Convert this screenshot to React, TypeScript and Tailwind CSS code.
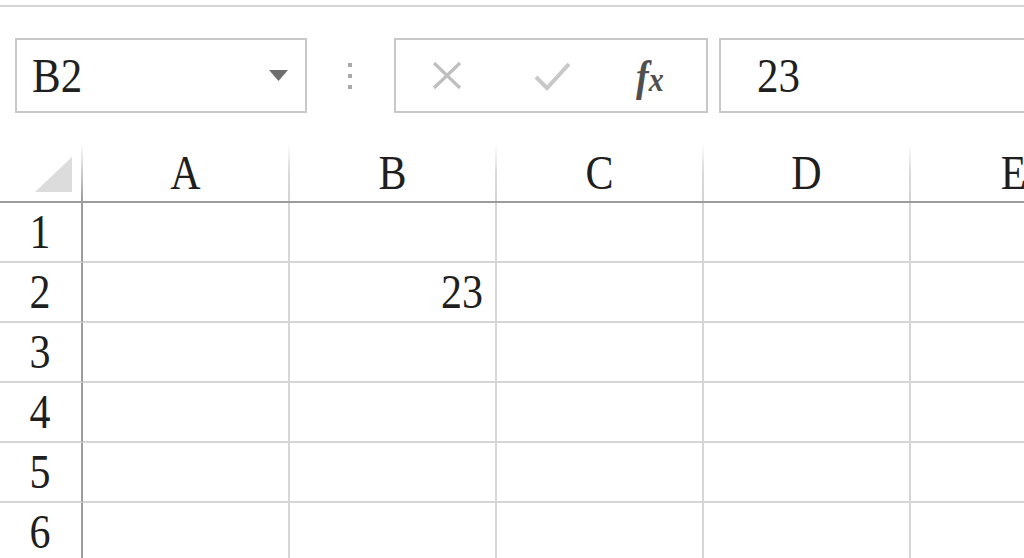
import React from 'react';

const COLS = ['A', 'B', 'C', 'D', 'E'];
const ROWS = [1, 2, 3, 4, 5, 6];

// text in the shot is a bit stretched vertically
function T({ children, className = '' }: { children: React.ReactNode; className?: string }) {
  return <span className={`inline-block scale-y-[1.15] ${className}`}>{children}</span>;
}

export default function App() {
  return (
    <div
      className="w-[1024px] h-[558px] overflow-hidden bg-white text-[#1f1f1f]"
      style={{ fontFamily: '"Liberation Serif", "Times New Roman", serif' }}
    >
      {/* ribbon edge */}
      <div className="mt-[5px] h-[2px] bg-[#d6d6d6]" />

      {/* formula bar */}
      <div className="mt-[31px] flex h-[75px] items-stretch pl-[15px]">
        <div className="flex w-[292px] shrink-0 items-center justify-between border-2 border-[#c8c8c8] pl-[15px] pr-[17px]">
          <T className="text-[43px] leading-none">B2</T>
          <svg width="19" height="11" viewBox="0 0 19 11">
            <path d="M0 0 H19 L9.5 11 Z" fill="#6e6e6e" />
          </svg>
        </div>

        <div className="ml-[40px] flex w-[5px] shrink-0 flex-col items-center justify-center gap-[7px]">
          <div className="h-[4px] w-[4px] bg-[#aaaaaa]" />
          <div className="h-[4px] w-[4px] bg-[#aaaaaa]" />
          <div className="h-[4px] w-[4px] bg-[#aaaaaa]" />
        </div>

        <div className="ml-[42px] flex w-[314px] shrink-0 items-center border-2 border-[#c8c8c8] pl-[36px]">
          <svg width="30" height="29" viewBox="0 0 30 29">
            <path d="M2 2 L28 27 M28 2 L2 27" stroke="#bfbfbf" strokeWidth="3.2" fill="none" />
          </svg>
          <svg width="38" height="30" viewBox="0 0 38 30" className="ml-[72px]">
            <path d="M2 16 L13 27 L35 3" stroke="#c8c8c8" strokeWidth="4" fill="none" />
          </svg>
          <div className="ml-[64px] flex items-baseline font-bold italic text-[#4f4f4f]">
            <T className="text-[38px] leading-none">f</T>
            <T className="text-[30px] leading-none">x</T>
          </div>
        </div>

        <div className="ml-[11px] flex flex-1 items-center border-y-2 border-l-2 border-[#c8c8c8] pl-[36px]">
          <T className="text-[43px] leading-none">23</T>
        </div>
      </div>

      {/* sheet */}
      <div className="mt-[30px]">
        {/* column headers */}
        <div className="flex h-[60px] border-b-2 border-[#9c9c9c]">
          <div className="flex w-[83px] shrink-0">
            <div className="flex-1 pl-[35px] pt-[14px]">
              <svg width="37" height="35" viewBox="0 0 37 35">
                <path d="M37 0 V35 H0 Z" fill="#dcdcdc" />
              </svg>
            </div>
            <div className="w-[2px] bg-linear-to-b from-white to-[#9c9c9c]" />
          </div>
          {COLS.map(c => (
            <div key={c} className="flex w-[207px] shrink-0">
              <div className="flex flex-1 items-center justify-center pt-[2px]">
                <T className="text-[42px] leading-none">{c}</T>
              </div>
              <div className="w-[2px] bg-linear-to-b from-white via-[#dadada] to-[#d4d4d4]" />
            </div>
          ))}
        </div>

        {/* rows */}
        {ROWS.map(r => (
          <div key={r} className="flex h-[60px]">
            <div className="flex w-[83px] shrink-0 border-r-2 border-b-2 border-r-[#9c9c9c] border-b-[#d6d6d6]">
              <div className="flex flex-1 items-center justify-center pr-[1px]">
                <T className="text-[42px] leading-none">{r}</T>
              </div>
            </div>
            {COLS.map(c => (
              <div
                key={c}
                className="flex w-[207px] shrink-0 items-center justify-end border-r-2 border-b-2 border-[#d6d6d6] pr-[12px]"
              >
                {c === 'B' && r === 2 && <T className="text-[42px] leading-none">23</T>}
              </div>
            ))}
          </div>
        ))}
      </div>
    </div>
  );
}
